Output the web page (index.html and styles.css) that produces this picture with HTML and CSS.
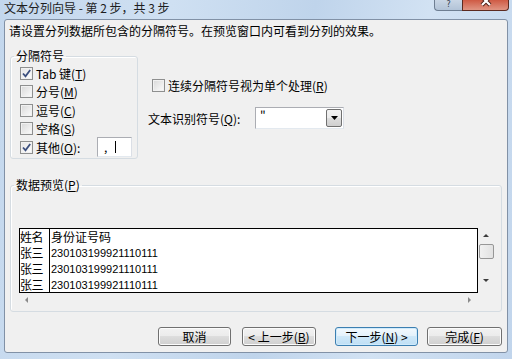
FILE: index.html
```html
<!DOCTYPE html>
<html lang="zh-CN">
<head>
  <meta charset="UTF-8">
  <title>文本分列向导</title>
  <link rel="stylesheet" href="styles.css">
</head>
<body>

<div class="window">
  <div class="titlebar">
    <span class="title">文本分列向导 - 第 2 步，共 3 步</span>
    <div class="caption-btns">
      <span class="help">?</span>
      <span class="close">
        <svg width="14" height="8" viewBox="0 0 14 8"><path d="M3 -3 L11 5 M11 -3 L3 5" stroke="#4b1d14" stroke-width="4"/><path d="M3 -3 L11 5 M11 -3 L3 5" stroke="#fff" stroke-width="2.2"/></svg>
      </span>
    </div>
  </div>

  <div class="client">
    <p class="intro">请设置分列数据所包含的分隔符号。在预览窗口内可看到分列的效果。</p>

    <div class="options">
      <fieldset class="group delimiters">
        <legend>分隔符号</legend>
        <div class="checks">
          <label class="check"><span class="box checked"><svg width="11" height="11" viewBox="0 0 11 11"><path d="M2 5.5 L4.5 8.3 L9.2 2" fill="none" stroke="#3b4f7e" stroke-width="1.8"/></svg></span>Tab 键(<u>T</u>)</label>
          <label class="check"><span class="box"></span>分号(<u>M</u>)</label>
          <label class="check"><span class="box"></span>逗号(<u>C</u>)</label>
          <label class="check"><span class="box"></span>空格(<u>S</u>)</label>
          <label class="check"><span class="box checked"><svg width="11" height="11" viewBox="0 0 11 11"><path d="M2 5.5 L4.5 8.3 L9.2 2" fill="none" stroke="#3b4f7e" stroke-width="1.8"/></svg></span><span class="other-label">其他(<u>O</u>):</span><span class="other-input">,<span class="caret"></span></span></label>
        </div>
      </fieldset>

      <div class="side">
        <label class="check consecutive"><span class="box"></span>连续分隔符号视为单个处理(<u>R</u>)</label>
        <div class="qualifier">
          <span class="qualifier-label">文本识别符号(<u>Q</u>):</span>
          <div class="combo">
            <span class="combo-value">"</span>
            <span class="drop"><svg width="7" height="4" viewBox="0 0 7 4"><path d="M0 0 H7 L3.5 4 Z" fill="#000"/></svg></span>
          </div>
        </div>
      </div>
    </div>

    <fieldset class="group preview">
      <legend>数据预览(<u>P</u>)</legend>
      <div class="preview-area">
        <div class="grid-row">
          <div class="grid">
            <div class="grid-line"><span class="cell name">姓名</span><span class="cell">身份证号码</span></div>
            <div class="grid-line"><span class="cell name">张三</span><span class="cell num">230103199921110111</span></div>
            <div class="grid-line"><span class="cell name">张三</span><span class="cell num">230103199921110111</span></div>
            <div class="grid-line"><span class="cell name">张三</span><span class="cell num">230103199921110111</span></div>
          </div>
          <div class="vscroll">
            <span class="arrow up"></span>
            <span class="thumb"></span>
            <span class="arrow down"></span>
          </div>
        </div>
        <div class="hscroll">
          <span class="arrow left"></span>
          <span class="arrow right"></span>
        </div>
      </div>
    </fieldset>

    <div class="buttons">
      <button class="btn cancel">取消</button>
      <button class="btn back">&lt; 上一步(<u>B</u>)</button>
      <button class="btn next">下一步(<u>N</u>) &gt;</button>
      <button class="btn finish">完成(<u>F</u>)</button>
    </div>
  </div>
</div>

</body>
</html>
```

FILE: styles.css
```css
* {
  box-sizing: border-box;
}
body {
  margin: 0;
  font-family: "Noto Sans CJK SC", "Noto Sans", sans-serif;
  font-size: 12px;
  color: #000;
}
u {
  text-decoration: underline;
  text-underline-offset: 1px;
}
.window {
  width: 512px;
  height: 359px;
  overflow: hidden;
  background: linear-gradient(100deg, #c3d7ed 0%, #cfe0f2 30%, #bfd4eb 55%, #d2e2f3 75%, #c1d5ec 100%);
}
.titlebar {
  height: 19px;
  display: flex;
  align-items: flex-start;
  padding-left: 4px;
}
.title {
  line-height: 15px;
  color: #1d1d1d;
}
.caption-btns {
  margin-left: auto;
  margin-right: 3px;
  display: flex;
  height: 11px;
}
.help {
  width: 28px;
  border: 1px solid #6e7e92;
  border-top: none;
  border-right: none;
  border-radius: 0 0 0 4px;
  background: linear-gradient(#c9d6e5, #b2c3d7);
  color: #34404f;
  font-family: "DejaVu Sans", sans-serif;
  font-size: 8px;
  line-height: 10px;
  text-align: center;
}
.close {
  width: 47px;
  border: 1px solid #5c2a20;
  border-top: none;
  border-radius: 0 0 4px 0;
  background: linear-gradient(#cf5a44, #e09583);
  display: flex;
  justify-content: center;
  overflow: hidden;
}
.client {
  margin: 0 4px;
  height: 334px;
  background: #f0f0f0;
  border: 1px solid #8191a6;
  border-radius: 3px;
}
.intro {
  margin: 0;
  padding: 3px 0 0 4px;
  line-height: 16px;
}
.options {
  display: flex;
  margin-top: 10px;
}
.group {
  margin: 0 0 0 5px;
  padding: 0;
  min-width: 0;
  border: 1px solid #d5dce2;
  border-radius: 3px;
  box-shadow: inset 1px 1px 0 #fff;
}
.group legend {
  margin-left: 3px;
  padding: 0 2px;
  line-height: 14px;
}
.delimiters {
  width: 128px;
  height: 110px;
}
.checks {
  padding: 1px 0 0 9px;
}
.check {
  display: flex;
  align-items: center;
  height: 18.5px;
  white-space: nowrap;
}
.box {
  width: 13px;
  height: 13px;
  margin-right: 3px;
  border: 1px solid #8e8f8f;
  background: linear-gradient(135deg, #d8d8d8, #fcfcfc);
  box-shadow: inset 0 0 0 1px #f1f1f1;
  display: flex;
  align-items: center;
  justify-content: center;
  flex: none;
}
.box.checked {
  background: linear-gradient(135deg, #e4e4e4, #ffffff);
}
.other-label {
  width: 61px;
}
.other-input {
  width: 35px;
  height: 20px;
  background: #fff;
  border: 1px solid #abadb3;
  border-right-color: #dbdfe6;
  border-bottom-color: #e3e9ef;
  padding-left: 6px;
  line-height: 18px;
  display: flex;
  align-items: center;
}
.caret {
  width: 1px;
  height: 12px;
  background: #000;
  margin-left: 8px;
}
.side {
  display: flex;
  flex-direction: column;
}
.consecutive {
  margin-top: 27px;
  height: 18px;
  padding-left: 14px;
}
.qualifier {
  margin-top: 13px;
  height: 22px;
  padding-left: 10px;
  display: flex;
  align-items: center;
}
.qualifier-label {
  width: 107px;
}
.combo {
  width: 89px;
  height: 22px;
  background: #fff;
  border: 1px solid #abadb3;
  border-right-color: #dbdfe6;
  border-bottom-color: #e3e9ef;
  display: flex;
  align-items: stretch;
  padding: 1px;
}
.combo-value {
  flex: 1;
  padding-left: 3px;
  line-height: 14px;
}
.drop {
  width: 16px;
  border: 1px solid #707070;
  border-radius: 2px;
  background: linear-gradient(#f2f2f2 0%, #ebebeb 50%, #dddddd 50%, #cfcfcf 100%);
  display: flex;
  align-items: center;
  justify-content: center;
}
.preview {
  margin-top: 19px;
  width: 492px;
  height: 134px;
}
.preview-area {
  margin: 36px 0 0 8px;
}
.grid-row {
  display: flex;
}
.grid {
  width: 459px;
  height: 65px;
  border: 1px solid #000;
  background: #fff;
  overflow: hidden;
}
.grid-line {
  display: flex;
  height: 16px;
  line-height: 16px;
}
.cell {
  padding-left: 1px;
  white-space: nowrap;
}
.cell.name {
  width: 30px;
  padding-left: 0;
  border-right: 1px solid #000;
  letter-spacing: -0.5px;
}
.cell.num {
  font-family: "Liberation Sans", Arial, sans-serif;
  font-size: 11px;
}
.vscroll {
  width: 16px;
  height: 65px;
  display: flex;
  flex-direction: column;
  align-items: center;
  padding-top: 6px;
}
.arrow {
  width: 0;
  height: 0;
  border: 3px solid transparent;
}
.arrow.up {
  border-bottom: 3px solid #3c3c3c;
  border-top: none;
}
.arrow.down {
  border-top: 3px solid #3c3c3c;
  border-bottom: none;
  margin-top: 20px;
}
.thumb {
  width: 15px;
  height: 15px;
  margin-top: 7px;
  border: 1px solid #979797;
  border-radius: 2px;
  background: linear-gradient(90deg, #f1f1f1, #e2e2e2);
}
.hscroll {
  width: 459px;
  height: 13px;
  display: flex;
  align-items: center;
  justify-content: space-between;
  padding: 0 7px 0 6px;
}
.arrow.left {
  border-right: 3px solid #8a8a8a;
  border-left: none;
}
.arrow.right {
  border-left: 3px solid #8a8a8a;
  border-right: none;
}
.buttons {
  display: flex;
  margin-top: 15px;
  padding-left: 153px;
}
.btn {
  height: 19px;
  padding: 0;
  border: 1px solid #707070;
  border-radius: 3px;
  background: linear-gradient(#f2f2f2 0%, #ebebeb 50%, #dddddd 50%, #cfcfcf 100%);
  box-shadow: inset 0 0 0 1px #fcfcfc;
  font: inherit;
  font-size: 12px;
  line-height: 17px;
  color: #000;
}
.cancel {
  width: 73px;
  margin-right: 11px;
}
.back {
  width: 74px;
  margin-right: 19px;
}
.next {
  width: 83px;
  margin-right: 9px;
  border-color: #3c7fb1;
  background: linear-gradient(#f3f9fd 0%, #e3f1fb 50%, #cfe8f8 50%, #bfdff5 100%);
  box-shadow: inset 0 0 0 1px #cfeafb;
}
.finish {
  width: 75px;
}
```
